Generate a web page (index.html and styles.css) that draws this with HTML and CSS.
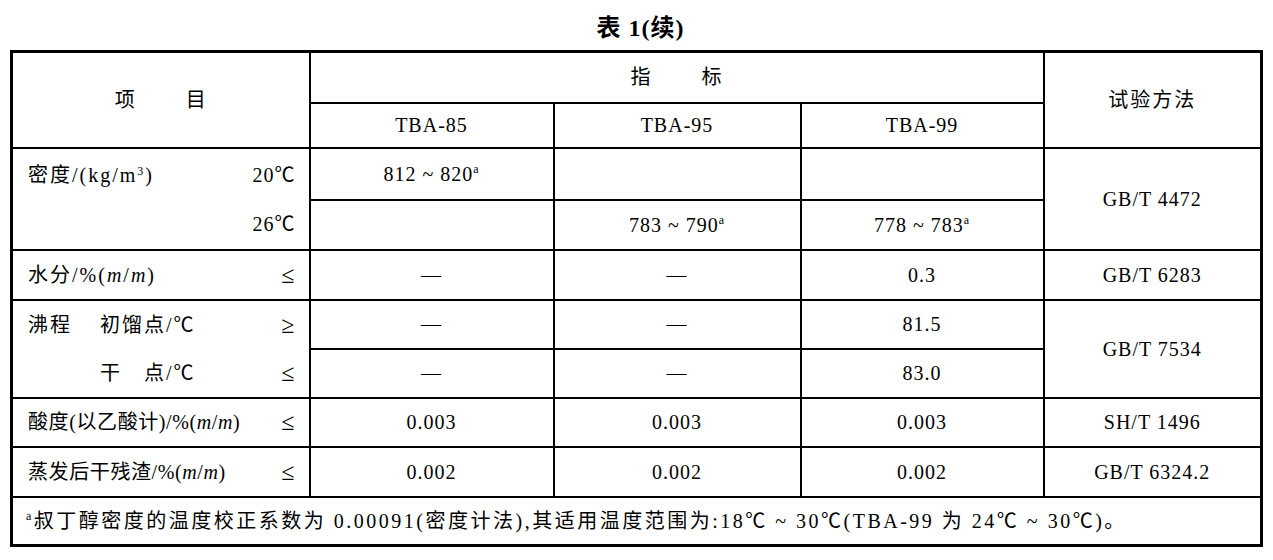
FILE: index.html
```html
<!DOCTYPE html>
<html lang="zh-CN">
<head>
<meta charset="utf-8">
<title>表 1(续)</title>
<link rel="stylesheet" href="styles.css">
</head>
<body>
<div class="page">
  <h1 class="title">表 1(续)</h1>
  <table class="spec">
    <colgroup>
      <col class="c-item">
      <col class="c-85">
      <col class="c-95">
      <col class="c-99">
      <col class="c-method">
    </colgroup>
    <tr class="r-h1">
      <th rowspan="2" class="spread"><span>项</span><span>目</span></th>
      <th colspan="3" class="spread"><span>指</span><span>标</span></th>
      <th rowspan="2" class="cjk">试验方法</th>
    </tr>
    <tr class="r-h2">
      <th>TBA-85</th>
      <th>TBA-95</th>
      <th>TBA-99</th>
    </tr>
    <tr class="r-a">
      <td rowspan="2" class="label">
        <div class="ln ln-a"><span class="cjk">密度/(kg/m<sup class="pw">3</sup>)</span><span>20℃</span></div>
        <div class="ln ln-b"><span></span><span>26℃</span></div>
      </td>
      <td>812 ~ 820<sup class="fn">a</sup></td>
      <td></td>
      <td></td>
      <td rowspan="2">GB/T 4472</td>
    </tr>
    <tr class="r-b">
      <td></td>
      <td>783 ~ 790<sup class="fn">a</sup></td>
      <td>778 ~ 783<sup class="fn">a</sup></td>
    </tr>
    <tr class="r-c">
      <td class="label"><div class="ln"><span class="cjk">水分/%(<i>m</i>/<i>m</i>)</span><span class="rel">≤</span></div></td>
      <td>—</td>
      <td>—</td>
      <td>0.3</td>
      <td>GB/T 6283</td>
    </tr>
    <tr class="r-d">
      <td rowspan="2" class="label">
        <div class="ln ln-d"><span class="cjk"><span class="grp">沸程</span>初馏点/℃</span><span class="rel">≥</span></div>
        <div class="ln ln-e"><span class="cjk"><span class="grp"></span>干　点/℃</span><span class="rel">≤</span></div>
      </td>
      <td>—</td>
      <td>—</td>
      <td>81.5</td>
      <td rowspan="2">GB/T 7534</td>
    </tr>
    <tr class="r-e">
      <td>—</td>
      <td>—</td>
      <td>83.0</td>
    </tr>
    <tr class="r-f">
      <td class="label"><div class="ln"><span class="cjk tight">酸度(以乙酸计)/%(<i>m</i>/<i>m</i>)</span><span class="rel">≤</span></div></td>
      <td>0.003</td>
      <td>0.003</td>
      <td>0.003</td>
      <td>SH/T 1496</td>
    </tr>
    <tr class="r-g">
      <td class="label"><div class="ln"><span class="cjk tight">蒸发后干残渣/%(<i>m</i>/<i>m</i>)</span><span class="rel">≤</span></div></td>
      <td>0.002</td>
      <td>0.002</td>
      <td>0.002</td>
      <td>GB/T 6324.2</td>
    </tr>
    <tr class="r-h">
      <td colspan="5" class="note cjk"><sup class="fn">a</sup>叔丁醇密度的温度校正系数为 0.00091(密度计法),其适用温度范围为:18℃ ~ 30℃(TBA-99 为 24℃ ~ 30℃)。</td>
    </tr>
  </table>
</div>
</body>
</html>
```

FILE: styles.css
```css
html, body {
  margin: 0;
  padding: 0;
  background: #ffffff;
}

body {
  font-family: "Liberation Serif", "Noto Sans CJK SC", serif;
  color: #000000;
}

.page {
  padding-left: 10px;
  width: 1251px;
}

.title {
  margin: 0;
  height: 50px;
  display: flex;
  align-items: center;
  justify-content: center;
  font-size: 24px;
  font-weight: bold;
  letter-spacing: 1px;
  padding-left: 10px;
}

.spec {
  border-collapse: collapse;
  table-layout: fixed;
  width: 1250px;
  border: 3px solid #000000;
}

.c-item { width: 298px; }
.c-85 { width: 244px; }
.c-95 { width: 247px; }
.c-99 { width: 243px; }
.c-method { width: 218px; }

.spec th,
.spec td {
  border: 2px solid #000000;
  padding: 0;
  text-align: center;
  vertical-align: middle;
  font-weight: normal;
  font-size: 20px;
  letter-spacing: 1px;
  line-height: 1;
}

.spec .cjk {
  letter-spacing: 2px;
}

.spread span + span {
  margin-left: 50px;
}

.r-h1 { height: 51px; }
.r-h2 { height: 45px; }
.r-a { height: 52px; }
.r-b { height: 50px; }
.r-c { height: 50px; }
.r-d { height: 49px; }
.r-e { height: 48px; }
.r-f { height: 49px; }
.r-g { height: 50px; }
.r-h { height: 49px; }

.spec .label {
  text-align: left;
  padding: 0 13px 0 15px;
}

.ln {
  display: flex;
  align-items: center;
  justify-content: space-between;
}

.ln-a { height: 51px; }
.ln-b { height: 48px; }
.ln-d { height: 49px; }
.ln-e { height: 47px; }

.grp {
  display: inline-block;
  width: 72px;
}

.spec .tight {
  letter-spacing: 0.6px;
}

.rel {
  font-size: 24px;
}

.pw {
  font-size: 12px;
  vertical-align: 7px;
  line-height: 0;
}

.fn {
  font-size: 12px;
  vertical-align: 8px;
  line-height: 0;
}

.spec .note {
  text-align: left;
  padding-left: 13px;
  letter-spacing: 2.5px;
}

i {
  font-style: italic;
}
```
